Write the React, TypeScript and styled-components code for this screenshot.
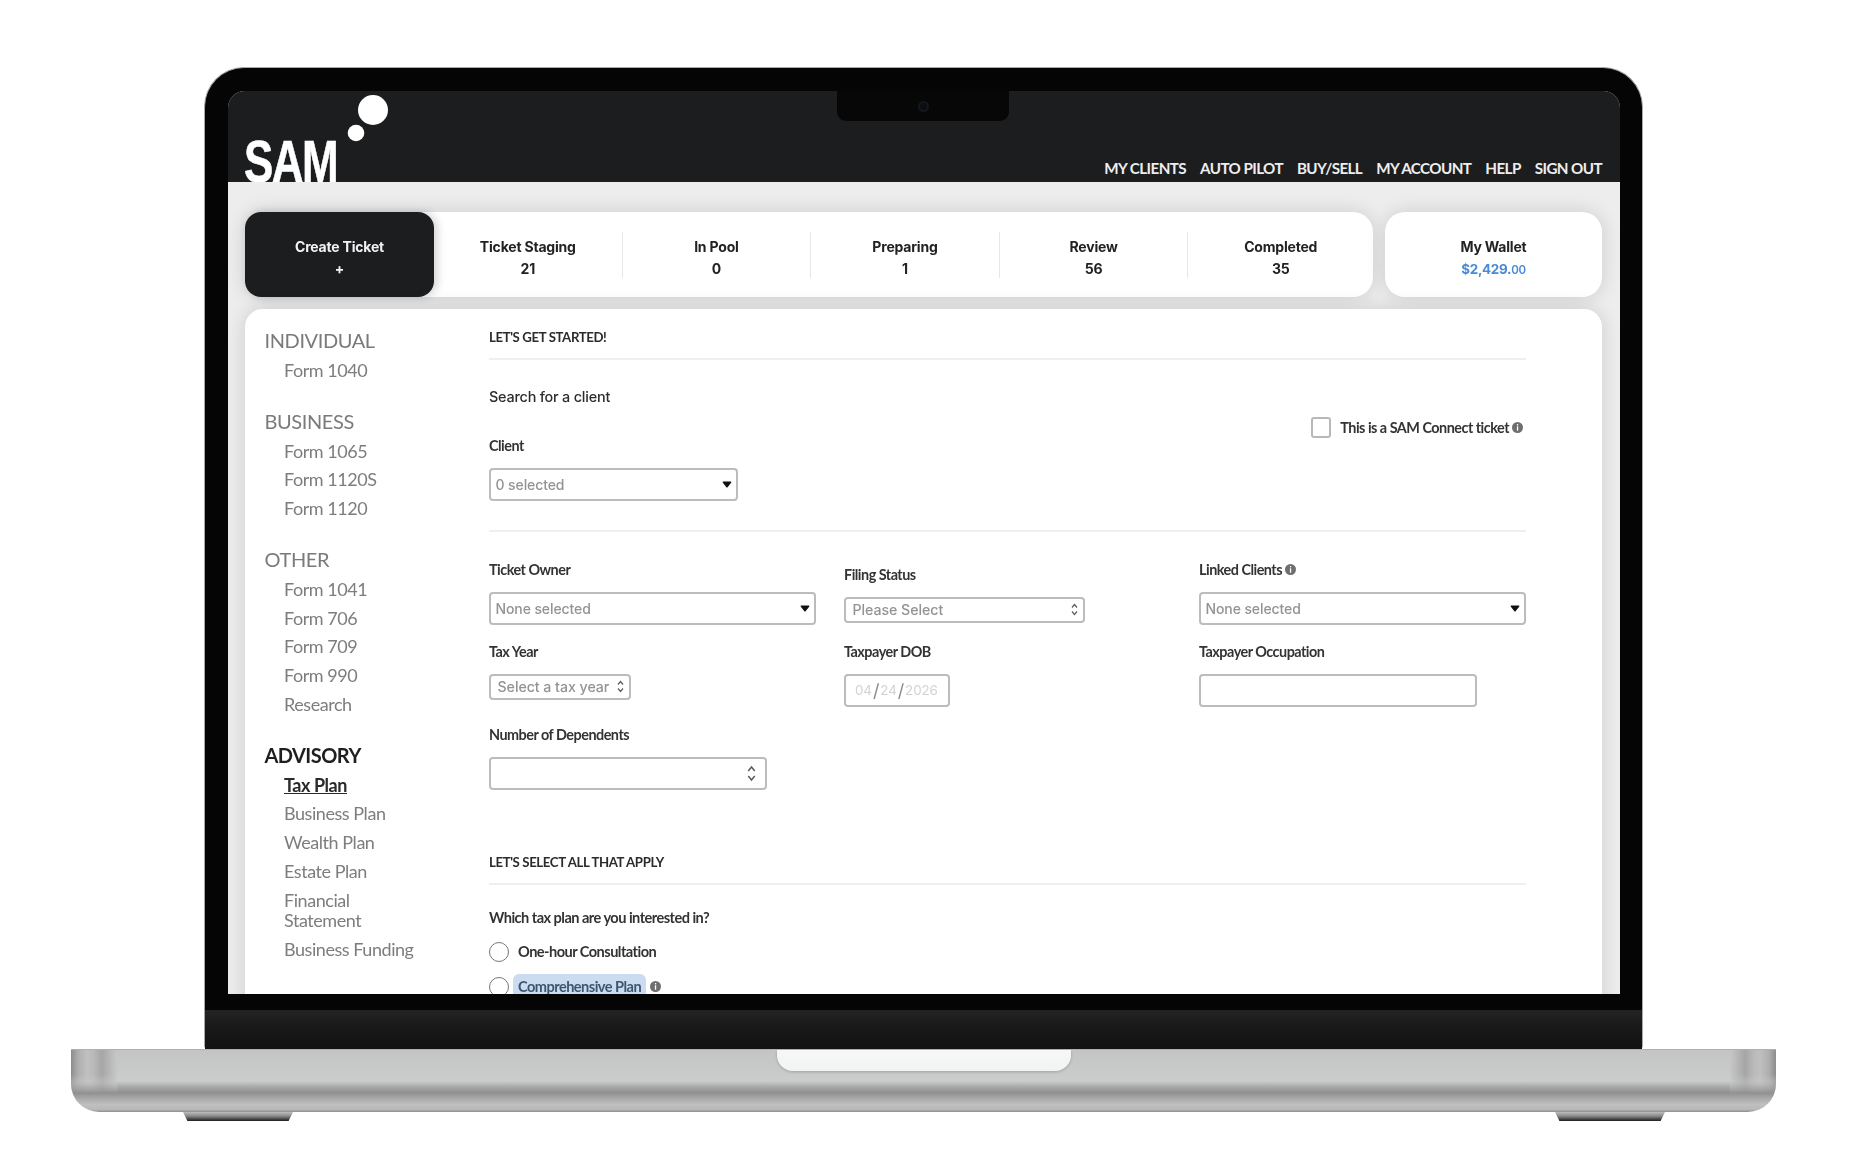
import React from "react";
import styled, { createGlobalStyle } from "styled-components";

const sans = `"Lato", "Liberation Sans", sans-serif`;
const geo = `"Inter", "Liberation Sans", sans-serif`;

/* Global */
const GlobalStyle = createGlobalStyle`
  html, body {
    margin: 0;
    background: #fff;
  }
  * {
    box-sizing: border-box;
  }
`;

/* Laptop frame */
const Page = styled.div`
  width: 1850px;
  height: 1162px;
  padding: 67px 3px 0 0;
  display: flex;
  flex-direction: column;
  align-items: center;
  overflow: hidden;
`;

const Lid = styled.div`
  position: relative;
  width: 1439px;
  height: 982px;
  padding: 23px 22px 0 23px;
  display: flex;
  flex-direction: column;
  background: #050505;
  border: 1px solid #a8a8a8;
  border-bottom: none;
  border-radius: 40px 40px 4px 4px;
`;

const Notch = styled.div`
  position: absolute;
  top: 23px;
  left: 632px;
  width: 172px;
  height: 30px;
  background: #070708;
  border-radius: 0 0 9px 9px;
  display: flex;
  align-items: center;
  justify-content: center;
  z-index: 2;
`;

const Camera = styled.div`
  width: 11px;
  height: 11px;
  border-radius: 50%;
  background: #0b0d10;
  border: 2px solid #14171b;
`;

const Chin = styled.div`
  flex: none;
  height: 55px;
  margin: 0 -22px 0 -23px;
  padding-top: 16px;
  border-radius: 0 0 3px 3px;
  &::after {
    content: "";
    display: block;
    height: 39px;
    background: linear-gradient(#232323, #1a1a1a 40%, #121212);
  }
`;

const Base = styled.div`
  position: relative;
  width: 1705px;
  height: 63px;
  display: flex;
  justify-content: center;
  border-top: 1px solid #b0b0b0;
  border-radius: 0 0 28px 28px;
  background: linear-gradient(#c3c5c5, #cbcccc 50%, #a6a7a7 60%, #8f9090 69%, #a9a9a9 78%, #c0c0c0 88%, #b8b8b8 96%, #8e8e8e);
  overflow: hidden;
  &::before,
  &::after {
    content: "";
    position: absolute;
    top: 0;
    bottom: 18px;
    width: 46px;
    -webkit-mask-image: linear-gradient(#000 55%, transparent);
    mask-image: linear-gradient(#000 55%, transparent);
  }
  &::before {
    left: 0;
    background: linear-gradient(90deg, #8c8c8c, #aeaeae 7px, #c0c0c0 16px, #bababa 22px, #a6a6a6 31px, #b6b6b6 38px, #c6c7c7);
  }
  &::after {
    right: 0;
    background: linear-gradient(270deg, #8c8c8c, #aeaeae 7px, #c0c0c0 16px, #bababa 22px, #a6a6a6 31px, #b6b6b6 38px, #c6c7c7);
  }
`;

const Thumb = styled.div`
  width: 294px;
  height: 21px;
  background: linear-gradient(#f7f7f7, #f2f3f3);
  border-radius: 0 0 16px 16px;
  box-shadow: 0 1px 3px rgba(0, 0, 0, 0.2);
`;

const Feet = styled.div`
  width: 1705px;
  padding: 0 111px 0 112px;
  display: flex;
  justify-content: space-between;
`;

const Foot = styled.div`
  width: 110px;
  height: 9px;
  background: linear-gradient(#bdbdbd, #8a8a8a 45%, #1d1d1d);
  clip-path: polygon(0 0, 100% 0, 96% 100%, 4% 100%);
`;

/* Screen */
const Screen = styled.div`
  flex: none;
  height: 903px;
  background: #ededed;
  border-radius: 17px 17px 0 0;
  overflow: hidden;
  display: flex;
  flex-direction: column;
  filter: blur(0.45px);
`;

const Header = styled.header`
  flex: none;
  height: 91px;
  padding: 0 18px 0 17px;
  display: flex;
  align-items: flex-end;
  justify-content: space-between;
  background: #1c1d1f;
  overflow: hidden;
`;

const Logo = styled.div`
  position: relative;
  width: 150px;
  height: 91px;
`;

const LogoWord = styled.div`
  position: absolute;
  left: -1px;
  top: 37px;
  font-family: "Liberation Sans", sans-serif;
  font-weight: 700;
  font-size: 59px;
  line-height: 68px;
  letter-spacing: -2px;
  color: #fff;
  -webkit-text-stroke: 0.6px #fff;
  transform: scaleX(0.745);
  transform-origin: left top;
`;

const LogoDots = styled.svg`
  position: absolute;
  left: 100px;
  top: 0;
`;

const Nav = styled.nav`
  display: flex;
  gap: 14px;
  padding-bottom: 4px;
`;

const NavLink = styled.a`
  font-family: ${sans};
  font-weight: 700;
  font-size: 15.2px;
  line-height: 20px;
  letter-spacing: -0.58px;
  color: #eeeeee;
`;

const Content = styled.main`
  padding: 30px 18px 0 17px;
  display: flex;
  flex-direction: column;
  gap: 12px;
`;

/* Ticket tabs */
const TabRow = styled.div`
  display: flex;
  gap: 12px;
`;

const TabCard = styled.div`
  flex: 1;
  min-width: 0;
  height: 85px;
  display: flex;
  align-items: center;
  background: #fff;
  border-radius: 16px 20px 20px 16px;
  box-shadow: 0 0 20px rgba(0, 0, 0, 0.14);
`;

const WalletCard = styled(TabCard)`
  flex: none;
  width: 217px;
  border-radius: 20px;
`;

const CreateTicket = styled.div`
  flex: none;
  width: 189px;
  height: 85px;
  padding-top: 7px;
  display: flex;
  flex-direction: column;
  align-items: center;
  justify-content: center;
  gap: 4.5px;
  background: #1c1d1f;
  color: #f2f2f2;
  border-radius: 16px;
  box-shadow: 3px 0 10px rgba(0, 0, 0, 0.18);
`;

const TabCell = styled.div`
  flex: none;
  width: 187.6px;
  padding-top: 7px;
  display: flex;
  flex-direction: column;
  align-items: center;
  gap: 4.5px;
  color: #222;
  &:last-child {
    flex: 1 1 0;
  }
`;

const TabTitle = styled.div`
  font-family: ${geo};
  font-weight: 700;
  font-size: 14px;
  line-height: 18px;
  letter-spacing: -0.2px;
`;

const TabCount = styled(TabTitle)`
  letter-spacing: -0.2px;
`;

const WalletAmount = styled(TabTitle)`
  color: #4a8ad6;
  font-size: 13.4px;
  letter-spacing: -0.3px;
  small {
    font-size: 11.5px;
    font-weight: 600;
    line-height: 1;
  }
`;

const TabDivider = styled.div`
  flex: none;
  width: 1px;
  height: 46px;
  background: #e6e6e6;
`;

/* Main panel */
const Panel = styled.section`
  padding: 18.5px 76px 40px 19.5px;
  display: flex;
  background: #fff;
  border-radius: 18px 18px 0 0;
  box-shadow: 0 0 20px rgba(0, 0, 0, 0.14);
`;

const Sidebar = styled.aside`
  flex: none;
  width: 224.5px;
`;

const SideGroup = styled.div`
  margin-bottom: 24.4px;
`;

const SideHeading = styled.div<{ $active?: boolean }>`
  font-family: ${sans};
  font-size: 20px;
  line-height: 24px;
  letter-spacing: ${(p) => (p.$active ? "-0.55px" : "-0.4px")};
  margin-top: 0.5px;
  margin-bottom: 3.5px;
  color: ${(p) => (p.$active ? "#1f1f1f" : "#7a7a7a")};
  font-weight: ${(p) => (p.$active ? 700 : 400)};
`;

const SideItem = styled.div<{ $active?: boolean }>`
  font-family: ${sans};
  font-size: 18px;
  line-height: 20px;
  letter-spacing: -0.45px;
  width: 125px;
  margin-left: 19.5px;
  padding: 4.4px 0;
  white-space: ${(p) => (p.$active ? "nowrap" : "normal")};
  color: ${(p) => (p.$active ? "#2a2a2a" : "#7d7d7d")};
  font-weight: ${(p) => (p.$active ? 700 : 400)};
  text-decoration: ${(p) => (p.$active ? "underline" : "none")};
`;

const Wide = styled(SideItem)`
  width: 140px;
  white-space: nowrap;
`;

const FormArea = styled.div`
  flex: 1;
  min-width: 0;
`;

const SectionTitle = styled.h2<{ $top?: number }>`
  margin: ${(p) => p.$top ?? 0}px 0 0;
  padding-bottom: 12px;
  border-bottom: 2px solid #efefef;
  font-family: ${sans};
  font-weight: 700;
  font-size: 13.2px;
  line-height: 18px;
  letter-spacing: -0.38px;
  color: #2b2b2b;
`;

const ClientRow = styled.div`
  display: flex;
  justify-content: space-between;
  align-items: flex-start;
`;

const SearchText = styled.div`
  margin: 27px 0 30px;
  font-family: ${geo};
  font-weight: 500;
  font-size: 14.4px;
  line-height: 20px;
  letter-spacing: -0.2px;
  color: #2c2c2c;
`;

const Connect = styled.label`
  margin: 57px 3px 0 0;
  display: flex;
  align-items: center;
  gap: 9px;
  font-family: ${sans};
  font-weight: 700;
  font-size: 14.4px;
  letter-spacing: -0.5px;
  color: #333;
`;

const CheckBox = styled.span`
  width: 20px;
  height: 21px;
  border: 2px solid #b8b8b8;
  border-radius: 3px;
`;

const LabelText = styled.span`
  display: flex;
  align-items: center;
  gap: 3px;
`;

const Rule = styled.hr`
  margin: 29px 0 29px;
  border: none;
  border-top: 2px solid #efefef;
`;

const FieldGrid = styled.div`
  display: grid;
  grid-template-columns: repeat(3, 327px);
  column-gap: 28px;
  row-gap: 18px;
`;

const Field = styled.div<{ $top?: number }>`
  padding-top: ${(p) => p.$top ?? 0}px;
`;

const Label = styled.div<{ $gap?: number }>`
  margin-bottom: ${(p) => p.$gap ?? 13}px;
  display: flex;
  align-items: center;
  gap: 3px;
  font-family: ${sans};
  font-weight: 700;
  font-size: 14.4px;
  line-height: 18px;
  letter-spacing: -0.5px;
  color: #333;
`;

const Control = styled.div<{ $width: number; $height?: number }>`
  width: ${(p) => p.$width}px;
  height: ${(p) => p.$height ?? 33}px;
  padding: 0 4.5px 0 4.5px;
  display: flex;
  align-items: center;
  justify-content: space-between;
  background: #fff;
  border: 2px solid #bcbcbc;
  border-radius: 4px;
  font-family: ${geo};
  font-weight: 500;
  font-size: 14px;
  letter-spacing: -0.1px;
  color: #939393;
`;

const NativeControl = styled(Control)`
  padding: 0 5px 0 6.5px;
  font-size: 14.2px;
  letter-spacing: -0.05px;
`;

const NumberControl = styled(NativeControl)`
  padding-right: 9px;
`;

const DateControl = styled(Control)`
  justify-content: flex-start;
  padding-left: 9px;
  font-size: 13.4px;
  font-weight: 400;
  color: #d2d2d2;
  b {
    font-weight: 400;
    color: #8c8c8c;
    font-size: 18px;
    margin: 0 1px;
  }
`;

const Question = styled.div`
  margin: 24px 0 15px;
  font-family: ${sans};
  font-weight: 700;
  font-size: 14.6px;
  line-height: 18px;
  letter-spacing: -0.54px;
  color: #333;
`;

const RadioRow = styled.div`
  height: 20px;
  margin-bottom: 15px;
  display: flex;
  align-items: center;
  gap: 4px;
`;

const Radio = styled.span`
  flex: none;
  width: 20px;
  height: 20px;
  border: 1.5px solid #777;
  border-radius: 50%;
`;

const RadioText = styled.span<{ $picked?: boolean }>`
  padding: ${(p) => (p.$picked ? "3px 5px" : "0 5px")};
  background: ${(p) => (p.$picked ? "#cbdcf1" : "transparent")};
  border-radius: 6px;
  font-family: ${sans};
  font-weight: 700;
  font-size: 14.6px;
  line-height: 20px;
  letter-spacing: -0.54px;
  color: ${(p) => (p.$picked ? "#3d5670" : "#333")};
`;

/* Icons */
const Caret = () => (
  <svg width="10" height="7" viewBox="0 0 11 8">
    <path d="M0.5 1.2 Q0.5 0.6 1.2 0.6 H9.8 Q10.5 0.6 10.5 1.2 Q10.5 1.8 10 2.4 L6.2 7 Q5.5 7.7 4.8 7 L1 2.4 Q0.5 1.8 0.5 1.2Z" fill="#111" />
  </svg>
);

const UpDown = ({ size = 6 }: { size?: number }) => (
  <svg width={size + 1} height={size * 2 + 1} viewBox="0 0 7 13" fill="none" stroke="#5c5c5c" strokeWidth="1.2">
    <path d="M1 4.5 L3.5 1.5 L6 4.5" />
    <path d="M1 8.5 L3.5 11.5 L6 8.5" />
  </svg>
);

const Info = () => (
  <svg width="11" height="11" viewBox="0 0 11 11">
    <circle cx="5.5" cy="5.5" r="5.5" fill="#6e6e6e" />
    <rect x="4.9" y="2" width="1.3" height="1.4" fill="#fff" />
    <rect x="4.9" y="4.3" width="1.3" height="4.4" fill="#fff" />
  </svg>
);

const navLinks = ["MY CLIENTS", "AUTO PILOT", "BUY/SELL", "MY ACCOUNT", "HELP", "SIGN OUT"];

const tabs = [
  { title: "Ticket Staging", count: 21 },
  { title: "In Pool", count: 0 },
  { title: "Preparing", count: 1 },
  { title: "Review", count: 56 },
  { title: "Completed", count: 35 },
];

const sideGroups = [
  { title: "INDIVIDUAL", items: ["Form 1040"] },
  { title: "BUSINESS", items: ["Form 1065", "Form 1120S", "Form 1120"] },
  { title: "OTHER", items: ["Form 1041", "Form 706", "Form 709", "Form 990", "Research"] },
];

/* Page */
const App: React.FC = () => (
  <Page>
    <GlobalStyle />
    <Lid>
      <Notch>
        <Camera />
      </Notch>
      <Screen>
        <Header>
          <Logo>
            <LogoWord>SAM</LogoWord>
            <LogoDots width="50" height="60" viewBox="0 0 50 60">
              <circle cx="28" cy="19" r="15" fill="#fff" />
              <circle cx="11" cy="42" r="8.3" fill="#fff" />
            </LogoDots>
          </Logo>
          <Nav>
            {navLinks.map((link) => (
              <NavLink key={link}>{link}</NavLink>
            ))}
          </Nav>
        </Header>
        <Content>
          <TabRow>
            <TabCard>
              <CreateTicket>
                <TabTitle>Create Ticket</TabTitle>
                <TabCount>+</TabCount>
              </CreateTicket>
              {tabs.map((tab, i) => (
                <React.Fragment key={tab.title}>
                  {i > 0 && <TabDivider />}
                  <TabCell>
                    <TabTitle>{tab.title}</TabTitle>
                    <TabCount>{tab.count}</TabCount>
                  </TabCell>
                </React.Fragment>
              ))}
            </TabCard>
            <WalletCard>
              <TabCell>
                <TabTitle>My Wallet</TabTitle>
                <WalletAmount>
                  $2,429.<small>00</small>
                </WalletAmount>
              </TabCell>
            </WalletCard>
          </TabRow>
          <Panel>
            <Sidebar>
              {sideGroups.map((group) => (
                <SideGroup key={group.title}>
                  <SideHeading>{group.title}</SideHeading>
                  {group.items.map((item) => (
                    <SideItem key={item}>{item}</SideItem>
                  ))}
                </SideGroup>
              ))}
              <SideGroup>
                <SideHeading $active>ADVISORY</SideHeading>
                <SideItem $active>Tax Plan</SideItem>
                <SideItem>Business Plan</SideItem>
                <SideItem>Wealth Plan</SideItem>
                <SideItem>Estate Plan</SideItem>
                <SideItem>Financial Statement</SideItem>
                <Wide>Business Funding</Wide>
              </SideGroup>
            </Sidebar>
            <FormArea>
              <SectionTitle>LET'S GET STARTED!</SectionTitle>
              <ClientRow>
                <div>
                  <SearchText>Search for a client</SearchText>
                  <Label>Client</Label>
                  <Control $width={249}>
                    0 selected
                    <Caret />
                  </Control>
                </div>
                <Connect>
                  <CheckBox />
                  <LabelText>
                    This is a SAM Connect ticket
                    <Info />
                  </LabelText>
                </Connect>
              </ClientRow>
              <Rule />
              <FieldGrid>
                <Field>
                  <Label>Ticket Owner</Label>
                  <Control $width={327}>
                    None selected
                    <Caret />
                  </Control>
                </Field>
                <Field $top={5}>
                  <Label>Filing Status</Label>
                  <NativeControl $width={241} $height={26}>
                    Please Select
                    <UpDown />
                  </NativeControl>
                </Field>
                <Field>
                  <Label>
                    Linked Clients
                    <Info />
                  </Label>
                  <Control $width={327}>
                    None selected
                    <Caret />
                  </Control>
                </Field>
                <Field>
                  <Label>Tax Year</Label>
                  <NativeControl $width={142} $height={26}>
                    Select a tax year
                    <UpDown />
                  </NativeControl>
                </Field>
                <Field>
                  <Label>Taxpayer DOB</Label>
                  <DateControl $width={106}>
                    04<b>/</b>24<b>/</b>2026
                  </DateControl>
                </Field>
                <Field>
                  <Label>Taxpayer Occupation</Label>
                  <Control $width={278} />
                </Field>
                <Field $top={1}>
                  <Label>Number of Dependents</Label>
                  <NumberControl $width={278}>
                    <span />
                    <UpDown size={8} />
                  </NumberControl>
                </Field>
              </FieldGrid>
              <SectionTitle $top={63}>LET'S SELECT ALL THAT APPLY</SectionTitle>
              <Question>Which tax plan are you interested in?</Question>
              <RadioRow>
                <Radio />
                <RadioText>One-hour Consultation</RadioText>
              </RadioRow>
              <RadioRow>
                <Radio />
                <RadioText $picked>Comprehensive Plan</RadioText>
                <Info />
              </RadioRow>
            </FormArea>
          </Panel>
        </Content>
      </Screen>
      <Chin />
    </Lid>
    <Base>
      <Thumb />
    </Base>
    <Feet>
      <Foot />
      <Foot />
    </Feet>
  </Page>
);

export default App;
